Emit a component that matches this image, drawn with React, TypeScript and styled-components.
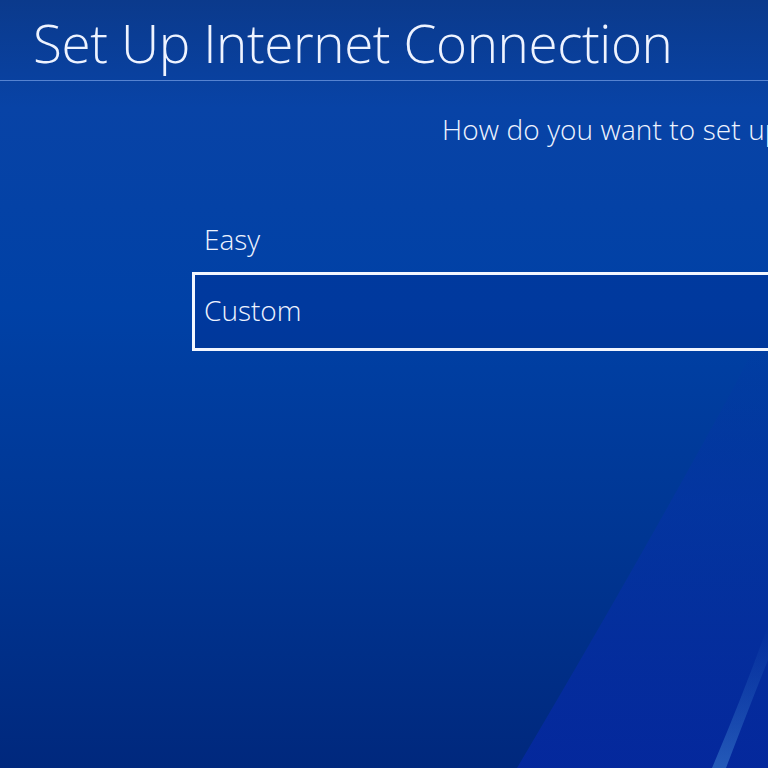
import React, { ReactElement } from 'react';
import styled, { createGlobalStyle } from 'styled-components';

const GlobalStyle = createGlobalStyle`
  html, body {
    margin: 0;
    padding: 0;
    width: 768px;
    height: 768px;
    overflow: hidden;
    background: #0038a0;
  }
`;

const Screen = styled.div`
  position: relative;
  width: 768px;
  height: 768px;
  overflow: hidden;
  display: flex;
  flex-direction: column;
  font-family: 'Open Sans', 'Liberation Sans', sans-serif;
  font-weight: 300;
  color: #eef3ff;
  background: linear-gradient(
    180deg,
    #0b3a8c 0%,
    #0843a6 14%,
    #0041a6 40%,
    #003693 70%,
    #00287d 100%
  );
`;

// soft light bands of the console wallpaper
const Backdrop = styled.svg`
  position: absolute;
  inset: 0;
  width: 768px;
  height: 768px;
  pointer-events: none;
`;

const Header = styled.header`
  position: relative;
  height: 80px;
  display: flex;
  align-items: flex-end;
  padding-left: 33px;
  border-bottom: 1px solid rgba(120, 160, 230, 0.7);
`;

const Title = styled.h1`
  margin: 0 0 11px;
  font-size: 53px;
  font-weight: 300;
  line-height: 1;
  letter-spacing: -0.4px;
  white-space: nowrap;
`;

const Body = styled.main`
  position: relative;
  display: flex;
  flex-direction: column;
`;

const Question = styled.p`
  margin: 34px 0 0 442px;
  font-size: 28px;
  line-height: 1;
  letter-spacing: 0.1px;
  white-space: nowrap;
`;

const OptionList = styled.ul`
  list-style: none;
  margin: 97px 0 0 192px;
  padding: 0;
  width: 700px;
  display: flex;
  flex-direction: column;
`;

const Option = styled.li<{ $selected?: boolean }>`
  box-sizing: border-box;
  height: ${(p) => (p.$selected ? '79px' : '54px')};
  margin: ${(p) => (p.$selected ? '0' : '-28px 0 6px')};
  display: flex;
  align-items: center;
  padding: 0 0 ${(p) => (p.$selected ? '4px' : '0')} 9px;
  font-size: 28px;
  border: 3px solid ${(p) => (p.$selected ? '#f2f6ff' : 'transparent')};
  background: ${(p) => (p.$selected ? 'rgba(0, 40, 140, 0.3)' : 'transparent')};
`;

export default function App(): ReactElement {
  return (
    <>
      <GlobalStyle />
      <Screen>
        <Backdrop viewBox="0 0 768 768">
          <defs>
            <linearGradient id="band" x1="0" y1="0" x2="0" y2="1">
              <stop offset="0" stopColor="#0634a6" stopOpacity="0" />
              <stop offset="0.4" stopColor="#0633a8" stopOpacity="0.55" />
              <stop offset="1" stopColor="#0528a0" stopOpacity="0.9" />
            </linearGradient>
            <linearGradient id="streak" x1="0" y1="0" x2="0" y2="1">
              <stop offset="0" stopColor="#2a6ac0" stopOpacity="0" />
              <stop offset="1" stopColor="#3a7ccc" stopOpacity="0.6" />
            </linearGradient>
          </defs>
          <path d="M768 320 L735 385 Q640 560 517 768 L768 768 Z" fill="url(#band)" />
          <path d="M768 625 Q745 690 712 768 L726 768 Q752 700 768 660 Z" fill="url(#streak)" />
        </Backdrop>
        <Header>
          <Title>Set Up Internet Connection</Title>
        </Header>
        <Body>
          <Question>How do you want to set up the network connection?</Question>
          <OptionList>
            <Option>Easy</Option>
            <Option $selected>Custom</Option>
          </OptionList>
        </Body>
      </Screen>
    </>
  );
}
